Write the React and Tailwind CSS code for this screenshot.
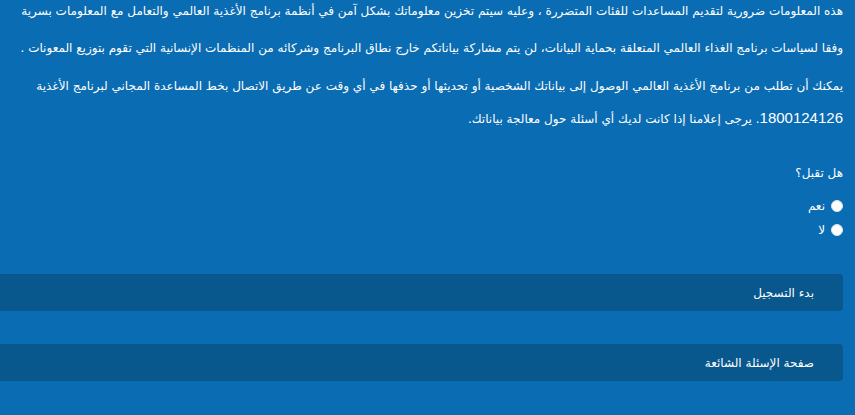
import React from 'react';

const lines = [
    "هذه المعلومات ضرورية لتقديم  المساعدات للفئات المتضررة ، وعليه سيتم تخزين معلوماتك بشكل آمن في أنظمة برنامج الأغذية العالمي والتعامل مع المعلومات بسرية",
    "وفقا لسياسات برنامج الغذاء العالمي المتعلقة بحماية البيانات، لن يتم مشاركة بياناتكم خارج نطاق البرنامج وشركائه من المنظمات الإنسانية التي تقوم بتوزيع المعونات .",
];

const App = () => {
    return (
        <div dir="rtl" className="w-[855px] h-[415px] overflow-hidden bg-[#0a6cb2] text-white font-['DejaVu_Sans',sans-serif] pr-3">
            {/* Consent text */}
            <div className="pt-[3px] text-[12px] leading-[16px]">
                <p className="whitespace-nowrap">{lines[0]}</p>
                <p className="whitespace-nowrap mt-[21px]">{lines[1]}</p>
                <p className="whitespace-nowrap mt-[22px]">
                    يمكنك أن تطلب من برنامج الأغذية العالمي الوصول إلى بياناتك الشخصية أو تحديثها أو حذفها في أي وقت عن طريق الاتصال بخط المساعدة المجاني لبرنامج الأغذية
                </p>
                <p className="whitespace-nowrap mt-[16px]">
                    <span className="font-['Liberation_Sans'] text-[15px]">1800124126</span>. يرجى إعلامنا إذا كانت لديك أي أسئلة حول معالجة بياناتك.
                </p>
            </div>

            {/* Question */}
            <div className="mt-[38px] text-[12px] leading-[16px]">
                <p>هل تقبل؟</p>
                <div className="mt-[17px] flex flex-col gap-[8px]">
                    <label className="flex items-center gap-[6px]">
                        <span className="w-[12px] h-[12px] rounded-full bg-white border border-[#d8e4ee]"></span>
                        <span>نعم</span>
                    </label>
                    <label className="flex items-center gap-[6px]">
                        <span className="w-[12px] h-[12px] rounded-full bg-white border border-[#d8e4ee]"></span>
                        <span>لا</span>
                    </label>
                </div>
            </div>

            {/* Action bars */}
            <div className="mt-[36px] -ml-3 flex flex-col gap-[33px] text-[12px]">
                <button className="h-[37px] w-full rounded-[4px] bg-[#08578d] text-right pr-[29px]">بدء التسجيل</button>
                <button className="h-[37px] w-full rounded-[4px] bg-[#08578d] text-right pr-[29px]">صفحة الإسئلة الشائعة</button>
            </div>
        </div>
    );
};

export default App;
